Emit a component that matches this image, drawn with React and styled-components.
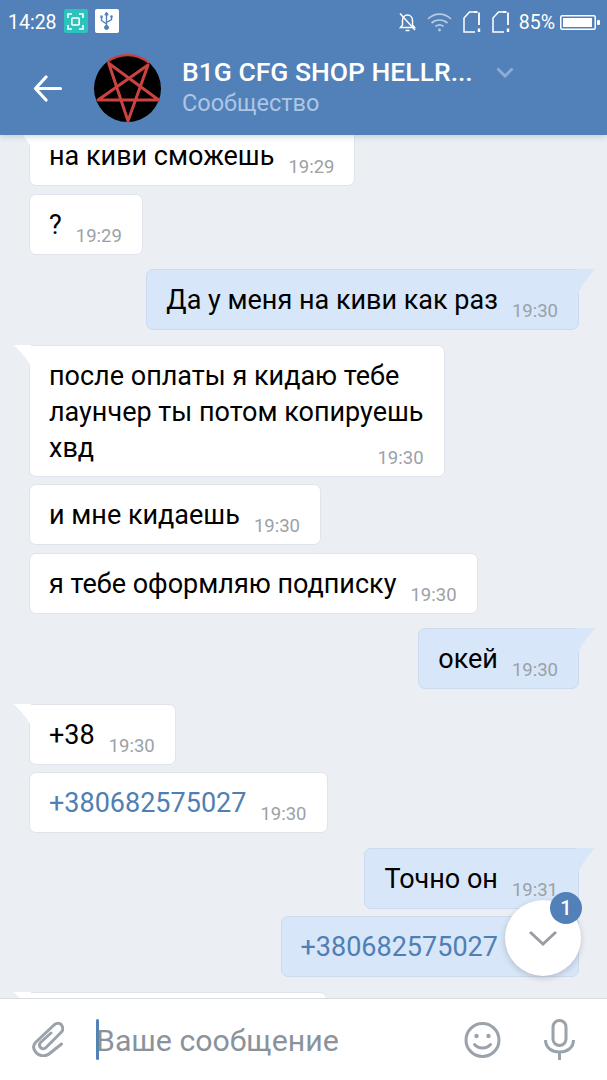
import React from 'react';
import styled, { createGlobalStyle, css } from 'styled-components';

const GlobalStyle = createGlobalStyle`
  html, body {
    margin: 0;
    padding: 0;
    background: #ebeff4;
  }
  * {
    box-sizing: border-box;
  }
`;

const messages = [
  { id: 1, text: 'на киви сможешь', time: '19:29', tail: true },
  { id: 2, text: '?', time: '19:29' },
  { id: 3, text: 'Да у меня на киви как раз', time: '19:30', out: true, tail: true, newGroup: true },
  {
    id: 4,
    text: 'после оплаты я кидаю тебе\nлаунчер ты потом копируешь\nхвд',
    time: '19:30',
    tail: true,
    newGroup: true,
    multiline: true
  },
  { id: 5, text: 'и мне кидаешь', time: '19:30' },
  { id: 6, text: 'я тебе оформляю подписку', time: '19:30' },
  { id: 7, text: 'окей', time: '19:30', out: true, tail: true, newGroup: true },
  { id: 8, text: '+38', time: '19:30', tail: true, newGroup: true },
  { id: 9, text: '+380682575027', time: '19:30', link: true },
  { id: 10, text: 'Точно он', time: '19:31', out: true, tail: true, newGroup: true },
  { id: 11, text: '+380682575027', time: '19:31', out: true, link: true }
];

const App = () => (
  <Screen>
    <GlobalStyle />
    <Header>
      <StatusBar>
        <StatusGroup>
          <Clock>14:28</Clock>
          <ScreenshotBadge>
            <svg width="17" height="17" viewBox="0 0 17 17" fill="none" stroke="#fff" strokeWidth="1.6">
              <path d="M1 5V1h4M12 1h4v4M16 12v4h-4M5 16H1v-4" />
              <rect x="4.8" y="5" width="7.4" height="7" rx="1" />
            </svg>
          </ScreenshotBadge>
          <UsbBadge>
            <svg width="15" height="20" viewBox="0 0 15 20" fill="#5181b8" stroke="#5181b8">
              <path d="M7.5 1 5.8 4h3.4z" />
              <path d="M7.5 3v13M7.5 13 2.5 9.5V6.5M7.5 11.5l5-3V6" fill="none" strokeWidth="1.4" />
              <circle cx="7.5" cy="16.5" r="2" />
              <rect x="1.3" y="4.5" width="2.4" height="2.4" strokeWidth="0" />
              <circle cx="12.5" cy="5.5" r="1.3" strokeWidth="0" />
            </svg>
          </UsbBadge>
        </StatusGroup>
        <StatusGroup $right>
          <svg width="19" height="21" viewBox="0 0 19 21" fill="none" stroke="#fff" strokeWidth="1.5">
            <path d="M4.5 13V8.5C4.5 5.5 6.500 3 9.500 3s5 2.500 5 5.500V13l2 2.500H2.500z" />
            <path d="M7.500 18.500h4" />
            <path d="M2 1.500 17 18" />
          </svg>
          <svg width="25" height="20" viewBox="0 0 25 20" fill="none" stroke="#b5cbe6" strokeWidth="1.7">
            <path d="M1 7c6.500-6.500 16.500-6.500 23 0M4.500 11c4.500-4 11.500-4 16 0M8.500 14.500c2.500-2 5.500-2 8 0" />
            <circle cx="12.500" cy="18" r="1.400" fill="#b5cbe6" stroke="none" />
          </svg>
          <SimIcon />
          <SimIcon />
          <Battery>85%</Battery>
          <svg width="40" height="15" viewBox="0 0 40 15">
            <rect x="0.750" y="0.750" width="34.500" height="13.500" rx="1.500" fill="none" stroke="#fff" strokeWidth="1.500" />
            <rect x="3" y="3" width="29" height="9" fill="#fff" />
            <rect x="37" y="5" width="3" height="5" rx="1" fill="#fff" />
          </svg>
        </StatusGroup>
      </StatusBar>
      <TitleBar>
        <BackButton>
          <svg width="30" height="27" viewBox="0 0 30 27" fill="none" stroke="#fff" strokeWidth="3.200" strokeLinecap="round" strokeLinejoin="round">
            <path d="M27.500 13.500H3M13 2 2.500 13.500 13 25" />
          </svg>
        </BackButton>
        <Avatar viewBox="0 0 67 67">
          <circle cx="33.500" cy="33.500" r="33.500" fill="#000" />
          <path d="M13 7A33.500 33.500 0 0 1 55 8" fill="none" stroke="#c8403b" strokeWidth="2.200" />
          <path
            d="M34 66 14.700 8.300 64.700 45H4L54 10z"
            fill="none"
            stroke="#cb4340"
            strokeWidth="3"
            strokeLinejoin="round"
          />
        </Avatar>
        <TitleText>
          <TitleRow>
            <Title>B1G CFG SHOP HELLR...</Title>
            <svg width="18" height="11" viewBox="0 0 18 11" fill="none" stroke="#8fadd3" strokeWidth="2.800">
              <path d="M1.500 1.500 9 9l7.500-7.500" />
            </svg>
          </TitleRow>
          <Subtitle>Сообщество</Subtitle>
        </TitleText>
      </TitleBar>
    </Header>

    <MessageList>
      {messages.map(m => (
        <Bubble key={m.id} $out={m.out} $tail={m.tail} $newGroup={m.newGroup} $multiline={m.multiline}>
          <BubbleText $link={m.link}>{m.text}</BubbleText>
          <Time $multiline={m.multiline}>{m.time}</Time>
        </Bubble>
      ))}
      <Bubble $tail $newGroup $wide />
      <ScrollButton>
        <svg width="30" height="16" viewBox="0 0 30 16" fill="none" stroke="#9a9ea3" strokeWidth="3">
          <path d="M2 2l13 12L28 2" />
        </svg>
        <UnreadBadge>1</UnreadBadge>
      </ScrollButton>
    </MessageList>

    <Composer>
      <svg width="32" height="35" viewBox="0 0 32 35" fill="none" stroke="#9aa2ab" strokeWidth="3" strokeLinecap="round">
        <path d="M29.500 22 17 32C13 35 7 34 4 30.500 1 27 1 23 4 20L22 3C25 .5 28 1 29.500 3 31.500 6 31 8.500 29 10.500L14 25.500C12 27.500 9.500 27 8 25 7 23.500 7.500 21.500 9 20L19 11" />
      </svg>
      <InputArea>
        <Caret />
        <Placeholder>Ваше сообщение</Placeholder>
      </InputArea>
      <ComposerIcons>
        <svg width="37" height="36" viewBox="0 0 37 36" fill="none" stroke="#9aa2ab" strokeWidth="3" strokeLinecap="round">
          <circle cx="18.500" cy="18" r="16.500" />
          <path d="M10.500 22.500c4 4.500 12 4.500 16 0" />
          <circle cx="12.500" cy="14" r="2.200" fill="#9aa2ab" stroke="none" />
          <circle cx="24.500" cy="14" r="2.200" fill="#9aa2ab" stroke="none" />
        </svg>
        <svg width="31" height="41" viewBox="0 0 31 41" fill="none" stroke="#9aa2ab" strokeWidth="3">
          <rect x="9" y="1.500" width="13" height="25" rx="6.500" />
          <path d="M1.500 21C1.500 29 8 33 15.500 33S29.500 29 29.500 21M15.500 33V41" />
        </svg>
      </ComposerIcons>
    </Composer>
  </Screen>
);

export default App;

const SimIcon = () => (
  <SimWrap width="18" height="22" viewBox="0 0 18 22" fill="none" stroke="#fff" strokeWidth="1.500">
    <path d="M11 1H6.500L1 7v14h11" />
    <path d="M11 1h3.500M16 1.500V14" strokeWidth="1.800" />
    <path d="M16 17.500v3.500" strokeWidth="2.400" />
  </SimWrap>
);

const font = `Roboto, "Liberation Sans", sans-serif`;

const Screen = styled.div`
  width: 607px;
  height: 1080px;
  display: flex;
  flex-direction: column;
  overflow: hidden;
  background: #ebeff4;
  font-family: ${font};
`;

const Header = styled.header`
  height: 135px;
  flex: none;
  background: #5181b8;
  position: relative;
  z-index: 2;
  box-shadow: 0 2px 6px rgba(40, 60, 90, 0.18);
`;

const StatusBar = styled.div`
  height: 44px;
  padding: 0 7px 0 8px;
  display: flex;
  align-items: center;
  justify-content: space-between;
`;

const StatusGroup = styled.div`
  display: flex;
  align-items: center;
  gap: ${p => (p.$right ? '10px' : '7px')};
`;

const Clock = styled.span`
  color: #fff;
  font-size: 19.500px;
`;

const ScreenshotBadge = styled.span`
  width: 24px;
  height: 24px;
  margin-bottom: 2px;
  border-radius: 2px;
  background: #2cc3bd;
  display: flex;
  align-items: center;
  justify-content: center;
`;

const UsbBadge = styled(ScreenshotBadge)`
  background: #fff;
`;

const SimWrap = styled.svg`
  margin-left: 1px;
`;

const Battery = styled.span`
  color: #fff;
  font-size: 19.500px;
  margin-left: -1px;
  margin-right: -5px;
`;

const TitleBar = styled.div`
  height: 91px;
  display: flex;
  align-items: flex-start;
  padding: 11px 0 0 33px;
`;

const BackButton = styled.div`
  margin-top: 20px;
  width: 61px;
  flex: none;
`;

const Avatar = styled.svg`
  width: 67px;
  height: 67px;
  flex: none;
  overflow: visible;
`;

const TitleText = styled.div`
  margin-left: 21px;
  display: flex;
  flex-direction: column;
  margin-top: 1px;
`;

const TitleRow = styled.div`
  display: flex;
  align-items: center;
  gap: 23px;
`;

const Title = styled.div`
  color: #fff;
  font-size: 26.500px;
  font-weight: 500;
  line-height: 32px;
`;

const Subtitle = styled.div`
  color: #adc6e6;
  font-size: 23.500px;
  line-height: 30px;
`;

const MessageList = styled.main`
  flex: 1;
  min-height: 0;
  position: relative;
  overflow: hidden;
  display: flex;
  flex-direction: column;
  padding: 0 28px 0 29px;
`;

const Bubble = styled.div`
  flex: none;
  position: relative;
  width: ${p => (p.$wide ? '298px' : 'fit-content')};
  min-height: 61px;
  padding: 12px 20px 10px 19px;
  margin-top: ${p => (p.$newGroup ? '14.500px' : '7.500px')};
  border-radius: 7px;
  display: flex;
  align-items: flex-start;
  gap: 14px;
  background: ${p => (p.$out ? '#d7e6f8' : '#fff')};
  border: 1px solid ${p => (p.$out ? '#cbdaed' : '#e0e4ea')};
  ${p => p.$out && 'align-self: flex-end;'}
  ${p =>
    p.$multiline &&
    css`
      flex-direction: column;
      gap: 0;
    `}

  &:first-child {
    margin-top: -10px;
  }

  ${p =>
    p.$tail &&
    !p.$out &&
    css`
      border-top-left-radius: 0;
      &::before {
        content: '';
        position: absolute;
        left: -17px;
        top: -1px;
        width: 18px;
        height: 24px;
        background: #fff;
        clip-path: path('M0 0 L18 0 L18 23 C15 15 8 7 0 0 Z');
      }
    `}

  ${p =>
    p.$tail &&
    p.$out &&
    css`
      border-top-right-radius: 0;
      &::before {
        content: '';
        position: absolute;
        right: -17px;
        top: -1px;
        width: 18px;
        height: 28px;
        background: #d7e6f8;
        clip-path: path('M0 0 L18 0 C14 6 5 14 0 28 Z');
      }
    `}
`;

const BubbleText = styled.div`
  font-size: 27px;
  line-height: 36px;
  white-space: pre-line;
  color: ${p => (p.$link ? '#4f7fb3' : '#000')};
`;

const Time = styled.span`
  font-size: 18.500px;
  line-height: 22px;
  color: #9ba1a7;
  margin-top: 18px;
  margin-bottom: -6px;
  ${p =>
    p.$multiline &&
    css`
      align-self: flex-end;
      margin-top: -19px;
      margin-bottom: -3px;
    `}
`;

const ScrollButton = styled.div`
  position: absolute;
  left: 505px;
  top: 765px;
  width: 76px;
  height: 76px;
  border-radius: 50%;
  background: #fff;
  box-shadow: 0 2px 6px rgba(0, 0, 0, 0.18);
  display: flex;
  align-items: center;
  justify-content: center;
`;

const UnreadBadge = styled.span`
  position: absolute;
  right: -1px;
  top: -8px;
  width: 32px;
  height: 32px;
  border-radius: 50%;
  background: #5181b8;
  color: #fff;
  font-size: 20px;
  font-weight: 500;
  display: flex;
  align-items: center;
  justify-content: center;
`;

const Composer = styled.footer`
  height: 82px;
  flex: none;
  background: #fff;
  border-top: 1px solid #d8dde3;
  position: relative;
  z-index: 1;
  display: flex;
  align-items: center;
  padding: 0 32px;
`;

const InputArea = styled.div`
  flex: 1;
  display: flex;
  align-items: center;
  margin-left: 32px;
`;

const Caret = styled.span`
  width: 3px;
  height: 41px;
  border-radius: 2px;
  background: #5181b8;
`;

const Placeholder = styled.span`
  font-size: 30.300px;
  color: #8a929b;
  margin-left: -3px;
  margin-top: 2px;
`;

const ComposerIcons = styled.div`
  display: flex;
  align-items: center;
  gap: 43px;
`;
